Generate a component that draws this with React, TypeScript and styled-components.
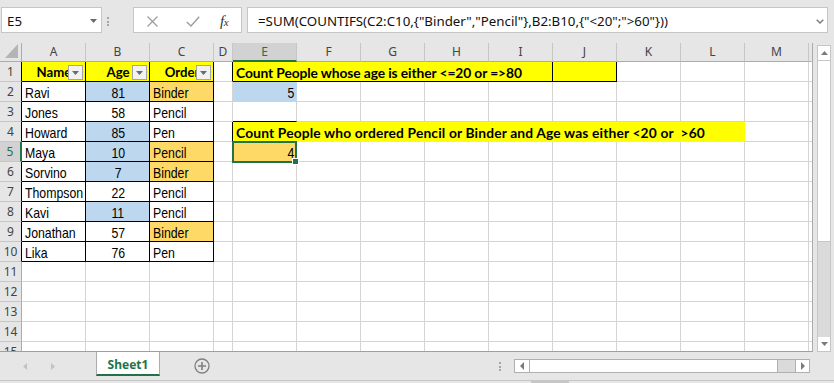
import React from 'react';
import styled, { createGlobalStyle, css } from 'styled-components';

const GREEN = '#217346';
const GRID = '#d4d4d4';
const HEAD = '#e6e6e6';
const HEAD_SEL = '#d2d2d2';
const YELLOW = '#ffff00';
const BLUE = '#bdd7ee';
const ORANGE = '#ffd966';
const BLACK = '#000000';

const GlobalStyle = createGlobalStyle`
  html, body { margin: 0; padding: 0; background: #e6e6e6; overflow: hidden; }
`;

const Window = styled.div`
  width: 834px;
  height: 383px;
  display: flex;
  flex-direction: column;
  background: #e6e6e6;
  overflow: hidden;
  font-family: "Noto Sans", "Open Sans", sans-serif;
`;

/* ---------- formula bar ---------- */
const FormulaBar = styled.div`
  flex: none;
  height: 43px;
  box-sizing: border-box;
  padding: 7px 0 0 1px;
  display: flex;
  align-items: flex-start;
`;

const Field = styled.div<{ $w: number }>`
  flex: none;
  box-sizing: border-box;
  width: ${p => p.$w}px;
  height: 26px;
  background: #fff;
  border: 1px solid #c6c6c6;
  display: flex;
  align-items: center;
  padding-top: 2px;
  font-size: 13.3px;
  color: #111;
  white-space: pre;
`;

const NameField = styled(Field)`
  justify-content: space-between;
  padding-left: 5px;
  padding-right: 4px;
`;

const FormulaField = styled(Field)`
  padding-left: 10px;
  padding-right: 3px;
`;

const IconField = styled(Field)`
  margin-right: 5px;
`;

const IconSlot = styled.span<{ $w: number }>`
  flex: none;
  width: ${p => p.$w}px;
  display: flex;
  justify-content: center;
  align-items: center;
`;

const Grip = styled.div<{ $w: number; $top: number }>`
  flex: none;
  width: ${p => p.$w}px;
  box-sizing: border-box;
  padding: ${p => p.$top}px 0 0 5px;
  display: flex;
  flex-direction: column;
  gap: 1.5px;
`;

const Dot = styled.span`
  display: block;
  width: 2px;
  height: 2px;
  background: #a6a6a6;
`;

const Fx = styled.span`
  font-family: "Liberation Serif", serif;
  font-style: italic;
  color: #333;
  font-size: 15px;
  line-height: 1;
  letter-spacing: -0.5px;
  small {
    font-size: 11px;
  }
`;

const Chevron = styled.svg`
  margin-left: auto;
  flex: none;
`;

/* ---------- sheet ---------- */
const SheetArea = styled.div`
  flex: none;
  height: 309px;
  display: flex;
`;

const Grid = styled.div`
  flex: none;
  width: 812px;
  height: 309px;
  box-sizing: border-box;
  border-bottom: 1px solid #9f9f9f;
  overflow: hidden;
  background: #fff;
  display: grid;
  grid-template-columns: 22px repeat(3, 64px) 19px repeat(9, 64px) 3px;
  grid-template-rows: 19px;
  grid-auto-rows: 20px;
`;

const Corner = styled.div`
  box-sizing: border-box;
  background: ${HEAD};
  border-right: 1px solid #ababab;
  border-bottom: 1px solid #ababab;
  display: flex;
  align-items: flex-end;
  justify-content: flex-end;
  padding: 0 3px 3px 0;
`;

const ColHead = styled.div<{ $sel?: boolean; $last?: boolean }>`
  box-sizing: border-box;
  background: ${p => (p.$sel ? HEAD_SEL : HEAD)};
  border-right: 1px solid ${p => (p.$last ? HEAD : '#c6c6c6')};
  border-bottom: ${p => (p.$sel ? `2px solid ${GREEN}` : '1px solid #ababab')};
  color: ${p => (p.$sel ? GREEN : '#444')};
  font-size: 12px;
  line-height: 18px;
  text-align: center;
`;

const RowHead = styled.div<{ $sel?: boolean; $edge: string }>`
  box-sizing: border-box;
  background: ${p => (p.$sel ? HEAD_SEL : HEAD)};
  border-right: ${p => (p.$sel ? `2px solid ${GREEN}` : `1px solid ${p.$edge}`)};
  border-bottom: 1px solid #c6c6c6;
  color: ${p => (p.$sel ? GREEN : '#444')};
  font-size: 12px;
  line-height: 19px;
  text-align: center;
`;

type Kind = 'plain' | 'head' | 'title';
type Align = 'left' | 'center' | 'right';

const Cell = styled.div<{
  $span: number;
  $fill: string;
  $r: string;
  $b: string;
  $align: Align;
  $kind: Kind;
  $track: number;
}>`
  position: relative;
  grid-column: span ${p => p.$span};
  box-sizing: border-box;
  height: 20px;
  min-width: 0;
  background: ${p => p.$fill};
  border-right: 1px solid ${p => p.$r};
  border-bottom: 1px solid ${p => p.$b};
  padding: 2px 2px 0 3px;
  text-align: ${p => p.$align};
  white-space: pre;
  color: #000;
  ${p =>
    p.$kind === 'plain'
      ? css`
          font-family: "Liberation Sans", Arial, sans-serif;
          font-size: 15px;
          line-height: 17px;
        `
      : css`
          font-family: Lato, "Open Sans", sans-serif;
          font-weight: bold;
          font-size: ${p.$kind === 'head' ? 13.2 : 13.8}px;
          line-height: 17px;
          letter-spacing: ${p.$track}px;
        `}
`;

/* Arial Narrow look: regular sans, condensed horizontally */
const Narrow = styled.span<{ $align: Align }>`
  display: inline-block;
  transform: scaleX(0.82);
  transform-origin: ${p => p.$align} center;
`;

const FilterBtn = styled.span`
  position: absolute;
  right: 2px;
  top: 3px;
  width: 15px;
  height: 15px;
  box-sizing: border-box;
  border: 1px solid #a6a6a6;
  background: #f2f2f2;
  display: flex;
  align-items: center;
  justify-content: center;
`;

const Selection = styled.span`
  position: absolute;
  left: -1px;
  top: -1px;
  width: 65px;
  height: 22px;
  box-sizing: border-box;
  border: 2px solid ${GREEN};
  z-index: 2;
  pointer-events: none;
`;

const Handle = styled.span`
  position: absolute;
  right: -4px;
  bottom: -4px;
  width: 7px;
  height: 7px;
  box-sizing: border-box;
  border: 1px solid #fff;
  background: ${GREEN};
`;

/* ---------- scroll bars ---------- */
const VScroll = styled.div`
  flex: none;
  width: 22px;
  height: 309px;
  box-sizing: border-box;
  border-left: 1px solid #ababab;
  padding: 2px 3px 0 4px;
  display: flex;
  flex-direction: column;
`;

const VFrame = styled.div`
  flex: 1;
  display: flex;
  flex-direction: column;
  border: 1px solid #c6c6c6;
  background: #dadada;
`;

const ScrollBtn = styled.div<{ $h?: number; $w?: number; $sep?: boolean }>`
  flex: none;
  ${p => (p.$h ? `height: ${p.$h}px;` : '')}
  ${p => (p.$w ? `width: ${p.$w}px;` : '')}
  ${p => (p.$sep ? 'border-left: 1px solid #b0b0b0;' : '')}
  box-sizing: border-box;
  background: #fff;
  display: flex;
  align-items: center;
  justify-content: center;
`;

const VThumb = styled.div`
  flex: none;
  height: 180px;
  background: #fff;
  border-top: 1px solid #c6c6c6;
  border-bottom: 1px solid #c6c6c6;
`;

const Track = styled.div`
  flex: 1;
`;

/* ---------- tab bar ---------- */
const TabBar = styled.div`
  flex: none;
  height: 28px;
  display: flex;
  align-items: flex-start;
`;

const NavArrows = styled.div`
  flex: none;
  width: 96px;
  height: 28px;
  box-sizing: border-box;
  padding-left: 23px;
  display: flex;
  align-items: center;
  gap: 24px;
`;

const SheetTab = styled.div`
  flex: none;
  width: 64px;
  height: 24px;
  box-sizing: border-box;
  background: #fff;
  border-left: 1px solid #ababab;
  border-right: 1px solid #ababab;
  border-bottom: 2px solid ${GREEN};
  padding-top: 2px;
  display: flex;
  align-items: center;
  justify-content: center;
  font-weight: bold;
  font-size: 12px;
  color: ${GREEN};
`;

const AddSheet = styled.svg`
  flex: none;
  margin: 6px 0 0 34px;
`;

const TabGrip = styled(Grip)`
  margin-left: 284px;
`;

const HScroll = styled.div`
  flex: none;
  margin: 7px 0 0 15px;
  width: 296px;
  height: 14px;
  box-sizing: border-box;
  border: 1px solid #b0b0b0;
  background: #dadada;
  display: flex;
`;

const HThumb = styled.div`
  flex: none;
  width: 247px;
  background: #fff;
  border-left: 1px solid #b0b0b0;
  border-right: 1px solid #b0b0b0;
`;

const StatusStrip = styled.div`
  flex: none;
  height: 3px;
  box-sizing: border-box;
  border-top: 1px solid #c6c6c6;
  display: flex;
`;

const StatusPiece = styled.span`
  margin-left: 531px;
  width: 38px;
  height: 2px;
  background: #c6c6c6;
`;

/* ---------- data ---------- */
const COLS = ['A', 'B', 'C', 'D', 'E', 'F', 'G', 'H', 'I', 'J', 'K', 'L', 'M', 'N'];

type Spec = {
  key: string;
  text: string;
  span: number;
  fill: string;
  r: string;
  b: string;
  align: Align;
  kind: Kind;
  track: number;
  filter?: boolean;
  selected?: boolean;
};

const people: [string, string, string, boolean, boolean][] = [
  ['Ravi', '81', 'Binder', true, true],
  ['Jones', '58', 'Pencil', false, false],
  ['Howard', '85', 'Pen', true, false],
  ['Maya', '10', 'Pencil', true, true],
  ['Sorvino', '7', 'Binder', true, true],
  ['Thompson', '22', 'Pencil', false, false],
  ['Kavi', '11', 'Pencil', true, false],
  ['Jonathan', '57', 'Binder', false, true],
  ['Lika', '76', 'Pen', false, false],
];

const TITLE1 = 'Count People whose age is either <=20 or =>80';
const TITLE2 = 'Count People who ordered Pencil or Binder and Age was either <20 or  >60';

function buildRow(r: number): Spec[] {
  const out: Spec[] = [];
  let c = 0;
  while (c < COLS.length) {
    const col = COLS[c];
    const s: Spec = {
      key: col + r,
      text: '',
      span: 1,
      fill: '#fff',
      r: col === 'N' ? '#fff' : GRID,
      b: GRID,
      align: 'left',
      kind: 'plain',
      track: 0,
    };
    const inTable = r <= 10 && c <= 2;
    if (r === 1 && c <= 2) {
      s.text = ['Name', 'Age', 'Order'][c];
      s.fill = YELLOW;
      s.kind = 'head';
      s.align = 'center';
      s.filter = true;
    } else if (r >= 2 && r <= 10 && c <= 2) {
      const p = people[r - 2];
      if (c === 0) s.text = p[0];
      if (c === 1) {
        s.text = p[1];
        s.align = 'center';
        if (p[3]) s.fill = BLUE;
      }
      if (c === 2) {
        s.text = p[2];
        if (p[4]) s.fill = ORANGE;
      }
    }
    if (s.fill !== '#fff') {
      s.r = s.fill;
      s.b = s.fill;
    }
    if (inTable) {
      s.r = BLACK;
      s.b = BLACK;
    }
    if (col === 'D' && (r === 1 || r === 4)) s.r = BLACK;
    if (col === 'E' && r === 1) {
      Object.assign(s, { span: 5, fill: YELLOW, text: TITLE1, kind: 'title', r: BLACK, b: BLACK, track: -0.1 });
    }
    if (col === 'J' && r === 1) Object.assign(s, { fill: YELLOW, r: BLACK, b: BLACK });
    if (col === 'E' && r === 2) Object.assign(s, { fill: BLUE, r: BLUE, b: BLUE, text: '5', align: 'right' });
    if (col === 'E' && r === 3) s.b = BLACK;
    if (col === 'E' && r === 4) {
      Object.assign(s, { span: 8, fill: YELLOW, r: YELLOW, b: YELLOW, text: TITLE2, kind: 'title', track: 0.15 });
    }
    if (col === 'E' && r === 5) {
      Object.assign(s, { fill: ORANGE, r: ORANGE, b: ORANGE, text: '4', align: 'right', selected: true });
    }
    out.push(s);
    c += s.span;
  }
  return out;
}

const ROWS = Array.from({ length: 15 }, (_, i) => ({ n: i + 1, cells: buildRow(i + 1) }));

const Tri = ({ dir, color, w, h }: { dir: 'down' | 'up' | 'left' | 'right'; color: string; w: number; h: number }) => {
  const pts =
    dir === 'down'
      ? `0,0 ${w},0 ${w / 2},${h}`
      : dir === 'up'
      ? `0,${h} ${w},${h} ${w / 2},0`
      : dir === 'left'
      ? `${w},0 ${w},${h} 0,${h / 2}`
      : `0,0 0,${h} ${w},${h / 2}`;
  return (
    <svg width={w} height={h} viewBox={`0 0 ${w} ${h}`}>
      <polygon points={pts} fill={color} />
    </svg>
  );
};

export default function App() {
  return (
    <Window>
      <GlobalStyle />
      <FormulaBar>
        <NameField $w={101}>
          <span>E5</span>
          <Tri dir="down" color="#6b6b6b" w={7} h={4} />
        </NameField>
        <Grip $w={31} $top={10}>
          <Dot />
          <Dot />
          <Dot />
        </Grip>
        <IconField $w={109}>
          <IconSlot $w={37}>
            <svg width="11" height="11" viewBox="0 0 11 11">
              <path d="M0.5 0.5 L10.5 10.5 M10.5 0.5 L0.5 10.5" stroke="#9c9c9c" strokeWidth="1.2" fill="none" />
            </svg>
          </IconSlot>
          <IconSlot $w={44}>
            <svg width="14" height="11" viewBox="0 0 14 11">
              <path d="M0.8 6 L5 10 L13.2 0.8" stroke="#9c9c9c" strokeWidth="1.4" fill="none" />
            </svg>
          </IconSlot>
          <IconSlot $w={18}>
            <Fx>
              f<small>x</small>
            </Fx>
          </IconSlot>
        </IconField>
        <FormulaField $w={581}>
          <span>{'=SUM(COUNTIFS(C2:C10,{"Binder","Pencil"},B2:B10,{"<20";">60"}))'}</span>
          <Chevron width="8" height="5" viewBox="0 0 8 5">
            <path d="M0.7 0.7 L4 4 L7.3 0.7" stroke="#7a7a7a" strokeWidth="1.4" fill="none" />
          </Chevron>
        </FormulaField>
      </FormulaBar>

      <SheetArea>
        <Grid>
          <Corner>
            <svg width="13" height="14" viewBox="0 0 13 14">
              <polygon points="13,0 13,14 0,14" fill="#b4b4b4" />
            </svg>
          </Corner>
          {COLS.map(c => (
            <ColHead key={c} $sel={c === 'E'} $last={c === 'N'}>
              {c === 'N' ? '' : c}
            </ColHead>
          ))}
          {ROWS.map(row => (
            <React.Fragment key={row.n}>
              <RowHead $sel={row.n === 5} $edge={row.n <= 10 ? BLACK : '#ababab'}>
                {row.n}
              </RowHead>
              {row.cells.map(s => (
                <Cell
                  key={s.key}
                  $span={s.span}
                  $fill={s.fill}
                  $r={s.r}
                  $b={s.b}
                  $align={s.align}
                  $kind={s.kind}
                  $track={s.track}
                >
                  {s.kind === 'plain' && s.text ? <Narrow $align={s.align}>{s.text}</Narrow> : s.text}
                  {s.filter && (
                    <FilterBtn>
                      <Tri dir="down" color="#6b6b6b" w={7} h={4} />
                    </FilterBtn>
                  )}
                  {s.selected && (
                    <Selection>
                      <Handle />
                    </Selection>
                  )}
                </Cell>
              ))}
            </React.Fragment>
          ))}
        </Grid>
        <VScroll>
          <VFrame>
            <ScrollBtn $h={14}>
              <Tri dir="up" color="#7a7a7a" w={7} h={4} />
            </ScrollBtn>
            <VThumb />
            <Track />
            <ScrollBtn $h={14}>
              <Tri dir="down" color="#7a7a7a" w={7} h={4} />
            </ScrollBtn>
          </VFrame>
        </VScroll>
      </SheetArea>

      <TabBar>
        <NavArrows>
          <Tri dir="left" color="#c2c2c2" w={4} h={7} />
          <Tri dir="right" color="#c2c2c2" w={4} h={7} />
        </NavArrows>
        <SheetTab>Sheet1</SheetTab>
        <AddSheet width="16" height="16" viewBox="0 0 16 16">
          <circle cx="8" cy="8" r="7" stroke="#808080" strokeWidth="1.3" fill="none" />
          <path d="M8 4 V12 M4 8 H12" stroke="#808080" strokeWidth="1.6" />
        </AddSheet>
        <TabGrip $w={2} $top={10}>
          <Dot />
          <Dot />
          <Dot />
        </TabGrip>
        <HScroll>
          <ScrollBtn $w={14}>
            <Tri dir="left" color="#7a7a7a" w={4} h={8} />
          </ScrollBtn>
          <HThumb />
          <Track />
          <ScrollBtn $w={14} $sep>
            <Tri dir="right" color="#7a7a7a" w={4} h={8} />
          </ScrollBtn>
        </HScroll>
      </TabBar>
      <StatusStrip>
        <StatusPiece />
      </StatusStrip>
    </Window>
  );
}
